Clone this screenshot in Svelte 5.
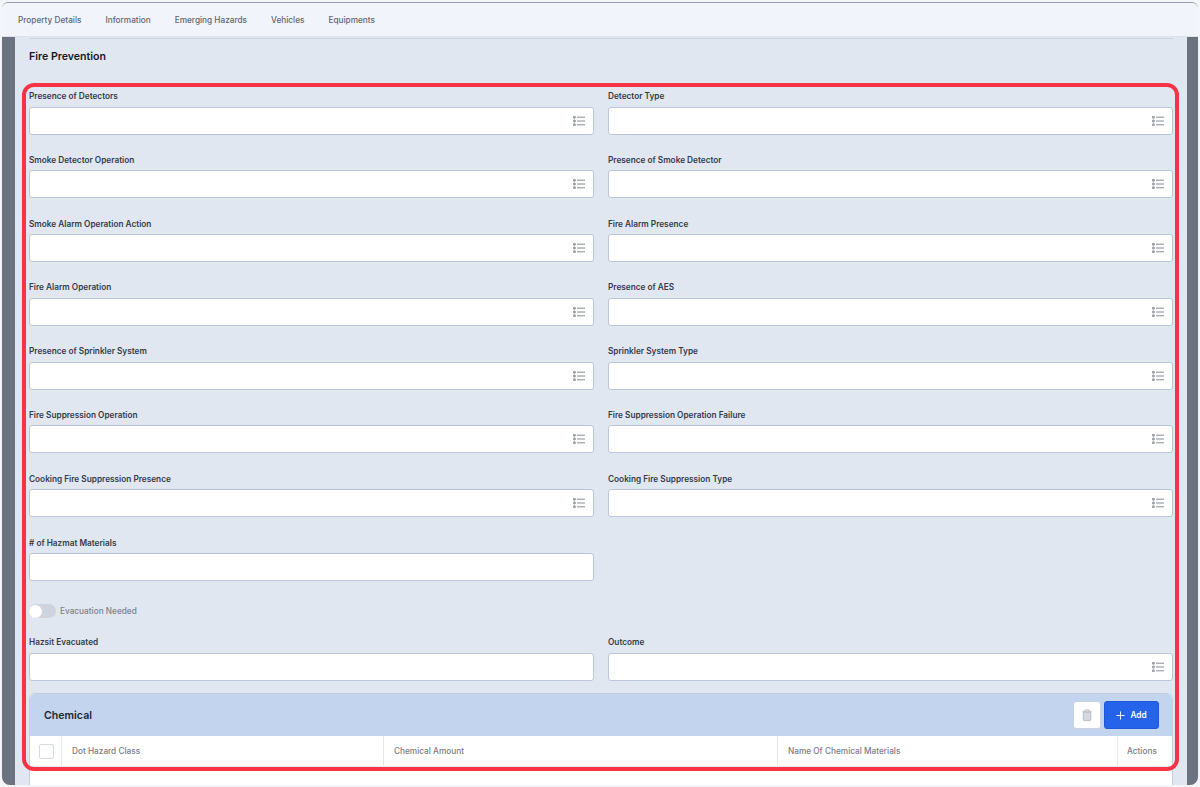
<script>
  const tabs = ['Property Details', 'Information', 'Emerging Hazards', 'Vehicles', 'Equipments'];

  const rows = [
    [{ label: 'Presence of Detectors', list: true }, { label: 'Detector Type', list: true }],
    [{ label: 'Smoke Detector Operation', list: true }, { label: 'Presence of Smoke Detector', list: true }],
    [{ label: 'Smoke Alarm Operation Action', list: true }, { label: 'Fire Alarm Presence', list: true }],
    [{ label: 'Fire Alarm Operation', list: true }, { label: 'Presence of AES', list: true }],
    [{ label: 'Presence of Sprinkler System', list: true }, { label: 'Sprinkler System Type', list: true }],
    [{ label: 'Fire Suppression Operation', list: true }, { label: 'Fire Suppression Operation Failure', list: true }],
    [{ label: 'Cooking Fire Suppression Presence', list: true }, { label: 'Cooking Fire Suppression Type', list: true }],
    [{ label: '# of Hazmat Materials', list: false }]
  ];

  const lastRow = [{ label: 'Hazsit Evacuated', list: false }, { label: 'Outcome', list: true }];
</script>

{#snippet field(item)}
  <div class="field">
    <span class="label">{item.label}</span>
    <div class="input">
      {#if item.list}
        <svg class="list-icon" viewBox="0 0 12 10" width="12" height="10">
          <circle cx="1.4" cy="1.2" r="1.2" fill="#a4aab5" stroke="#7d8491" stroke-width="0.5" />
          <circle cx="1.4" cy="5" r="1.2" fill="#a4aab5" stroke="#7d8491" stroke-width="0.5" />
          <circle cx="1.4" cy="8.8" r="1.2" fill="#a4aab5" stroke="#7d8491" stroke-width="0.5" />
          <path d="M4 1.2H12M4 5H12M4 8.8H12" stroke="#868c98" stroke-width="1" fill="none" />
        </svg>
      {/if}
    </div>
  </div>
{/snippet}

<div class="page">
  <nav class="tabs">
    {#each tabs as tab}
      <span class="tab">{tab}</span>
    {/each}
  </nav>

  <div class="shell">
    <main class="panel">
      <div class="rule"></div>
      <h2>Fire Prevention</h2>

      <div class="grid">
        {#each rows as row}
          {#each row as item}
            {@render field(item)}
          {/each}
          {#if row.length === 1}
            <div></div>
          {/if}
        {/each}
      </div>

      <div class="toggle-row">
        <span class="toggle"><span class="knob"></span></span>
        <span class="toggle-label">Evacuation Needed</span>
      </div>

      <div class="grid">
        {#each lastRow as item}
          {@render field(item)}
        {/each}
      </div>

      <section class="chemical">
        <header>
          <h3>Chemical</h3>
          <div class="actions">
            <button class="trash" aria-label="Delete">
              <svg viewBox="0 0 12 14" width="10" height="12">
                <path d="M1.5 3.5h9v9.2a.8.8 0 0 1-.8.8H2.3a.8.8 0 0 1-.8-.8z" fill="#d5d9df" stroke="#a9afb9" stroke-width="0.9" />
                <path d="M0.5 2.5h11M4 2.3V.8h4v1.5" fill="none" stroke="#a9afb9" stroke-width="0.9" />
              </svg>
            </button>
            <button class="add">
              <svg viewBox="0 0 10 10" width="9" height="9">
                <path d="M5 .5v9M.5 5h9" stroke="#fff" stroke-width="1" fill="none" />
              </svg>
              Add
            </button>
          </div>
        </header>
        <div class="thead">
          <div class="cell check"><span class="box"></span></div>
          <div class="cell">Dot Hazard Class</div>
          <div class="cell">Chemical Amount</div>
          <div class="cell">Name Of Chemical Materials</div>
          <div class="cell last">Actions</div>
        </div>
        <div class="tbody"></div>
      </section>
    </main>
  </div>

  <div class="highlight"></div>
</div>

<style>
  :global(body) {
    margin: 0;
    background: #f4f5f9;
  }

  .page {
    position: relative;
    width: 1200px;
    height: 787px;
    box-sizing: border-box;
    padding: 2px 2px 2px;
    display: flex;
    flex-direction: column;
    overflow: hidden;
    font-family: Inter, "Liberation Sans", sans-serif;
  }

  .tabs {
    flex: none;
    height: 33px;
    display: flex;
    align-items: center;
    gap: 24px;
    padding: 0 0 0 16px;
    background: #f1f4fa;
    border-top: 1px solid #9a9fb3;
    border-radius: 6px 6px 0 0;
    border-bottom: 1px solid #dde3ec;
  }

  .tab {
    font-size: 8.25px;
    color: #5f6673;
    font-weight: 500;
  }

  .shell {
    flex: 1;
    min-height: 0;
    background: #6b7280;
    padding: 0 11px 0 13px;
    border-radius: 0 0 8px 8px;
    overflow: hidden;
  }

  .panel {
    height: 100%;
    background: #e1e7f0;
    padding: 0 14px;
    box-sizing: border-box;
    overflow: hidden;
  }

  .rule {
    height: 1px;
    background: #cdd5e2;
    margin-top: 1px;
  }

  h2 {
    margin: 11px 0 28px;
    font-size: 10.6px;
    line-height: 13px;
    font-weight: 600;
    color: #16181d;
  }

  .grid {
    display: grid;
    grid-template-columns: 565px 565px;
    column-gap: 14px;
    row-gap: 20.3px;
  }

  .field {
    display: flex;
    flex-direction: column;
  }

  .label {
    font-size: 8.25px;
    line-height: 11px;
    font-weight: 600;
    color: #343b4a;
    margin-bottom: 4.5px;
  }

  .input {
    height: 28px;
    box-sizing: border-box;
    background: #fff;
    border: 1px solid #bcc6da;
    border-radius: 3px;
    display: flex;
    align-items: center;
    justify-content: flex-end;
    padding-right: 8px;
  }

  .toggle-row {
    display: flex;
    align-items: center;
    gap: 4px;
    margin: 23px 0 19px;
    height: 14px;
  }

  .toggle {
    width: 27px;
    height: 14px;
    border-radius: 7px;
    background: #cdd4df;
    position: relative;
  }

  .knob {
    position: absolute;
    left: 0;
    top: 0;
    width: 13px;
    height: 13px;
    margin-top: 0.5px;
    border-radius: 50%;
    background: #fff;
  }

  .toggle-label {
    font-size: 8.25px;
    color: #7a818d;
    font-weight: 500;
  }

  .chemical {
    margin-top: 12.5px;
    border: 1px solid #c5cfdf;
    border-radius: 6px 6px 0 0;
    overflow: hidden;
    background: #fff;
  }

  .chemical header {
    height: 42px;
    background: #c3d4ee;
    display: flex;
    align-items: center;
    justify-content: space-between;
    padding: 0 13px 0 14px;
  }

  h3 {
    margin: 0;
    font-size: 10.6px;
    font-weight: 600;
    color: #1c2433;
  }

  .actions {
    display: flex;
    gap: 3px;
  }

  button {
    font-family: inherit;
    height: 28px;
    border-radius: 3px;
    padding: 0;
    display: flex;
    align-items: center;
    justify-content: center;
  }

  .trash {
    width: 28px;
    background: #fff;
    border: 1px solid #c8d2e2;
  }

  .add {
    width: 55px;
    gap: 5px;
    background: #2563eb;
    border: 1px solid #1d56d8;
    color: #fff;
    font-size: 8.25px;
    font-weight: 600;
  }

  .thead {
    height: 30px;
    display: grid;
    grid-template-columns: 32px 322px 394px 340px 1fr;
    background: #fff;
    border-bottom: 1px solid #e4e8ef;
  }

  .cell {
    display: flex;
    align-items: center;
    padding-left: 10px;
    font-size: 8.25px;
    font-weight: 500;
    color: #767d89;
    border-right: 1px solid #e2e6ee;
  }

  .cell.last {
    border-right: none;
    padding-left: 9px;
  }

  .check {
    padding-left: 9px;
  }

  .box {
    width: 13px;
    height: 13px;
    border: 1px solid #d5d9e0;
    border-radius: 2px;
    background: #fff;
  }

  .tbody {
    height: 30px;
    background: #fff;
  }

  .highlight {
    position: absolute;
    left: 22px;
    top: 83px;
    width: 1157px;
    height: 688px;
    box-sizing: border-box;
    border: 4px solid #f93345;
    border-radius: 12px;
    pointer-events: none;
  }
</style>
